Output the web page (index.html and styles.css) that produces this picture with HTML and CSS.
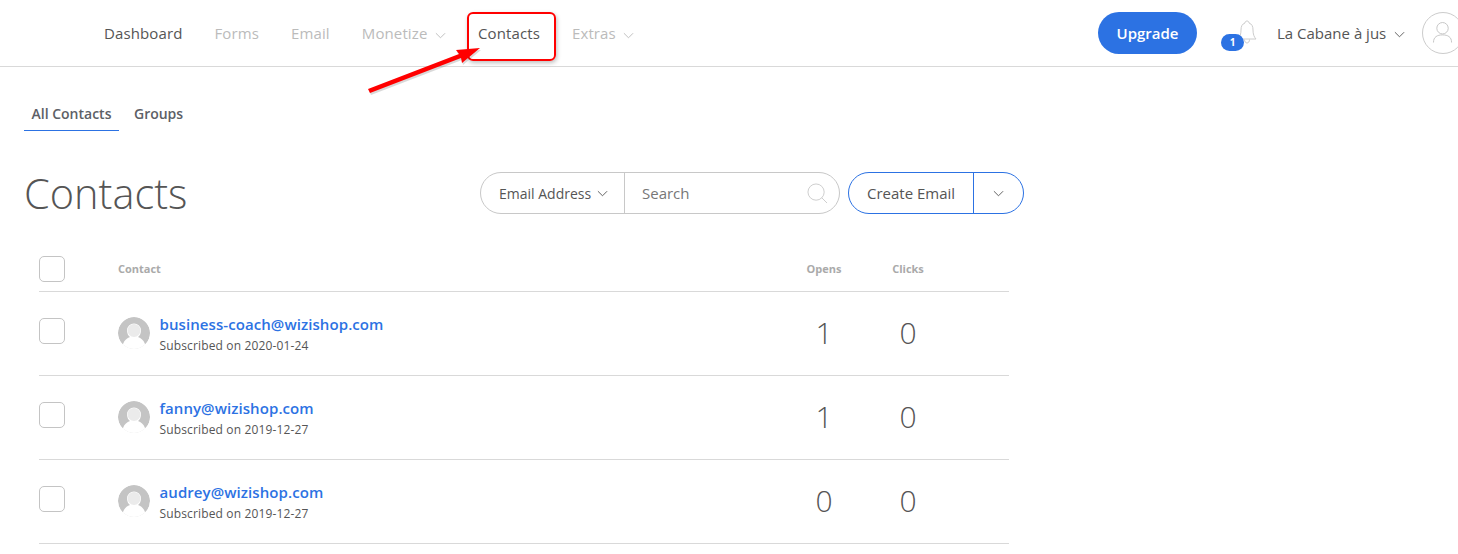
FILE: index.html
```html
<!DOCTYPE html>
<html lang="en">
<head>
<meta charset="utf-8">
<title>Contacts</title>
<link rel="stylesheet" href="styles.css">
</head>
<body>
<header class="topbar">
  <nav class="nav">
    <a class="nav-item">Dashboard</a>
    <a class="nav-item muted">Forms</a>
    <a class="nav-item muted">Email</a>
    <a class="nav-item muted">Monetize <svg class="chev" viewBox="0 0 12 7"><path d="M1 1l5 5 5-5"/></svg></a>
    <a class="nav-item">Contacts</a>
    <a class="nav-item muted">Extras <svg class="chev" viewBox="0 0 12 7"><path d="M1 1l5 5 5-5"/></svg></a>
  </nav>
  <div class="top-right">
    <button class="upgrade">Upgrade</button>
    <div class="bell">
      <svg viewBox="0 0 20 28" class="bell-icon"><path d="M10 2c1.300 0 2 .9 2 2 3 1 4 3.500 4 7 0 4 1 7 3 9H1c2-2 3-5 3-9 0-3.500 1-6 4-7 0-1.100.7-2 2-2zM7.500 20.500c0 2 1 3.500 2.500 3.500s2.500-1.500 2.500-3.500"/></svg>
      <span class="badge">1</span>
    </div>
    <span class="account">La Cabane à jus <svg class="chev dark" viewBox="0 0 12 7"><path d="M1 1l5 5 5-5"/></svg></span>
    <span class="profile">
      <svg viewBox="0 0 42 42"><circle cx="20.500" cy="16" r="6"/><path d="M11 31c0-6 4-8 9.500-8s9.500 2 9.500 8"/></svg>
    </span>
  </div>
</header>

<main class="page">
  <div class="tabs">
    <a class="tab active">All Contacts</a>
    <a class="tab">Groups</a>
  </div>

  <div class="title-row">
    <h1>Contacts</h1>
    <div class="tools">
      <div class="search">
        <span class="search-field">Email Address <svg class="chev dark" viewBox="0 0 12 7"><path d="M1 1l5 5 5-5"/></svg></span>
        <span class="search-input">Search
          <svg class="lens" viewBox="0 0 22 22"><circle cx="9.500" cy="9.500" r="8.500"/><path d="M15.500 15.500l5.500 5.500"/></svg>
        </span>
      </div>
      <div class="create">
        <span class="create-main">Create Email</span>
        <span class="create-more"><svg class="chev dark" viewBox="0 0 12 7"><path d="M1 1l5 5 5-5"/></svg></span>
      </div>
    </div>
  </div>

  <section class="table">
    <div class="row head">
      <span class="check"></span>
      <span>Contact</span>
      <span class="center">Opens</span>
      <span class="center">Clicks</span>
    </div>
    <div class="row">
      <span class="check"></span>
      <div class="contact">
        <svg class="avatar" viewBox="0 0 32 32"><circle cx="16" cy="16" r="16" fill="#c4c4c4"/><path d="M5 27c1.500-4 4-6 7-7-2-1.500-3-4-3-6.500a7 7 0 0 1 14 0c0 2.500-1 5-3 6.500 3 1 5.500 3 7 7l5 5H0z" fill="#fff"/><circle cx="16" cy="13.500" r="6.500" fill="#ebebeb"/></svg>
        <div><a class="email">business-coach@wizishop.com</a><p class="sub">Subscribed on 2020-01-24</p></div>
      </div>
      <span class="num">1</span>
      <span class="num">0</span>
    </div>
    <div class="row">
      <span class="check"></span>
      <div class="contact">
        <svg class="avatar" viewBox="0 0 32 32"><circle cx="16" cy="16" r="16" fill="#c4c4c4"/><path d="M5 27c1.500-4 4-6 7-7-2-1.500-3-4-3-6.500a7 7 0 0 1 14 0c0 2.500-1 5-3 6.500 3 1 5.500 3 7 7l5 5H0z" fill="#fff"/><circle cx="16" cy="13.500" r="6.500" fill="#ebebeb"/></svg>
        <div><a class="email">fanny@wizishop.com</a><p class="sub">Subscribed on 2019-12-27</p></div>
      </div>
      <span class="num">1</span>
      <span class="num">0</span>
    </div>
    <div class="row">
      <span class="check"></span>
      <div class="contact">
        <svg class="avatar" viewBox="0 0 32 32"><circle cx="16" cy="16" r="16" fill="#c4c4c4"/><path d="M5 27c1.500-4 4-6 7-7-2-1.500-3-4-3-6.500a7 7 0 0 1 14 0c0 2.500-1 5-3 6.500 3 1 5.500 3 7 7l5 5H0z" fill="#fff"/><circle cx="16" cy="13.500" r="6.500" fill="#ebebeb"/></svg>
        <div><a class="email">audrey@wizishop.com</a><p class="sub">Subscribed on 2019-12-27</p></div>
      </div>
      <span class="num">0</span>
      <span class="num">0</span>
    </div>
  </section>
</main>

<div class="highlight"></div>
<svg class="arrow" viewBox="0 0 140 70">
  <path class="arrow-shadow" d="M9 55L100 20 97 16 121 14 103 29 102 24 11 59z"/>
  <path class="arrow-fill" d="M8 53L99 18 96 14 120 12 102 27 101 22 10 57z"/>
</svg>
</body>
</html>
```
FILE: styles.css
```css
* { box-sizing: border-box; }
html, body { margin: 0; padding: 0; }
body {
  width: 1458px;
  height: 554px;
  overflow: hidden;
  position: relative;
  background: #fff;
  color: #555;
  font-family: "Open Sans", "Liberation Sans", sans-serif;
  font-size: 14px;
}
.topbar {
  height: 67px;
  border-bottom: 1px solid #d9d9d9;
  display: flex;
  align-items: center;
  justify-content: space-between;
  padding: 0 0 0 104px;
}
.nav { display: flex; gap: 32px; font-size: 15px; letter-spacing: .12px; color: #555; margin-top: -1px; }
.nav-item { white-space: nowrap; }
.nav-item.muted { color: #bbb; }
.chev { width: 11px; height: 7px; margin-left: 3.500px; margin-right: 0; vertical-align: 0; fill: none; stroke: #bbb; stroke-width: 1; }
.chev.dark { stroke: #555; }
.top-right { display: flex; align-items: center; flex: none; width: 360px; }
.upgrade {
  width: 99px;
  height: 42px;
  border: 0;
  border-radius: 21px;
  background: #2c72e3;
  color: #fff;
  font: 600 15px "Open Sans", sans-serif;
  padding: 0;
  flex: none;
}
.bell { position: relative; width: 24px; height: 28px; margin-left: 24px; flex: none; left: 16px; top: 0; }
.bell-icon { width: 20px; height: 28px; fill: none; stroke: #ccc; stroke-width: 1; display: block; }
.badge {
  position: absolute;
  left: -16px;
  top: 15px;
  width: 23px;
  height: 17px;
  border-radius: 8.500px;
  background: #2c72e3;
  color: #fff;
  font-size: 10px;
  font-weight: 700;
  line-height: 17px;
  text-align: center;
}
.account { margin-left: 32px; font-size: 15px; white-space: nowrap; flex: none; margin-top: -1px; }
.account .chev { margin-left: 4px; margin-right: 1px; vertical-align: 1px; }
.profile {
  width: 42px;
  height: 42px;
  margin-left: 16px;
  flex: none;
  border: 1px solid #ccc;
  border-radius: 50%;
  margin-right: -10px;
}
.profile svg { display: block; width: 40px; height: 40px; fill: none; stroke: #c4c4c4; stroke-width: 1; }

.page { padding: 0 0 0 24px; }
.tabs { display: flex; gap: 15px; padding-top: 31px; }
.tab { padding: 5px 0 7px; height: 33px; color: #5c6066; font-weight: 600; font-size: 14px; line-height: 21px; }
.tab.active { padding: 5px 7.500px 7px; border-bottom: 1px solid #2c72e3; }
.title-row {
  display: flex;
  align-items: center;
  width: 1000px;
  height: 42px;
  margin-top: 41px;
  justify-content: space-between;
}
h1 { margin: 0; font-size: 41.500px; font-weight: 300; color: #555; line-height: 42px; }
.tools { display: flex; gap: 8px; }
.search {
  display: flex;
  width: 360px;
  height: 42px;
  border: 1px solid #c8c8c8;
  border-radius: 21px;
}
.search-field {
  width: 144px;
  border-right: 1px solid #c8c8c8;
  padding-left: 18px;
  line-height: 41px;
  white-space: nowrap;
}
.search-field .chev { margin-left: 2px; margin-right: 0; vertical-align: 2px; }
.search-input {
  flex: 1;
  position: relative;
  padding-left: 17px;
  line-height: 41px;
  color: #777;
  font-size: 15px;
}
.lens { position: absolute; right: 11px; top: 10px; width: 21px; height: 21px; fill: none; stroke: #ccc; stroke-width: 1; }
.create {
  display: flex;
  height: 42px;
  width: 176px;
  border: 1px solid #2c72e3;
  border-radius: 21px;
}
.create-main { width: 125px; border-right: 1px solid #2c72e3; padding-left: 18px; line-height: 41px; white-space: nowrap; font-size: 15px; }
.create-more { flex: 1; display: flex; align-items: center; justify-content: center; }
.create-more .chev { margin: 0; }

.table { margin: 36px 0 0 15px; width: 970px; }
.row {
  display: grid;
  grid-template-columns: 79px 664px 84px 84px;
  align-items: center;
  height: 84px;
  border-bottom: 1px solid #d9d9d9;
}
.row.head { height: 42px; font-size: 11px; font-weight: 700; color: #aaa; }
.center { text-align: center; }
.check { display: block; width: 26px; height: 26px; border: 1px solid #c4c4c4; border-radius: 5px; margin-top: -6px; }
.row.head .check { margin-top: -4px; }
.head span:not(.check) { margin-top: -5px; }
.contact { display: flex; gap: 10px; align-items: center; margin-top: -1px; }
.avatar { width: 32px; height: 32px; flex: none; border-radius: 50%; }
.email { color: #2c72e3; font-size: 15px; font-weight: 600; letter-spacing: .08px; line-height: 20px; display: block; margin-top: 1px; margin-left: -.5px; }
.sub { margin: 4px 0 0 -.5px; font-size: 12px; letter-spacing: .15px; color: #555; line-height: 16px; }
.num { text-align: center; font-size: 30px; font-weight: 300; color: #555; margin-top: -2px; }

.highlight {
  position: absolute;
  left: 467px;
  top: 12px;
  width: 89px;
  height: 49px;
  border: 2px solid #f00;
  border-radius: 6px;
  box-shadow: 1px 2px 4px rgba(0,0,0,.25);
}
.arrow { position: absolute; left: 360px; top: 36px; width: 140px; height: 70px; }
.arrow-fill { fill: #f00; }
.arrow-shadow { fill: rgba(0,0,0,.15); }
```
